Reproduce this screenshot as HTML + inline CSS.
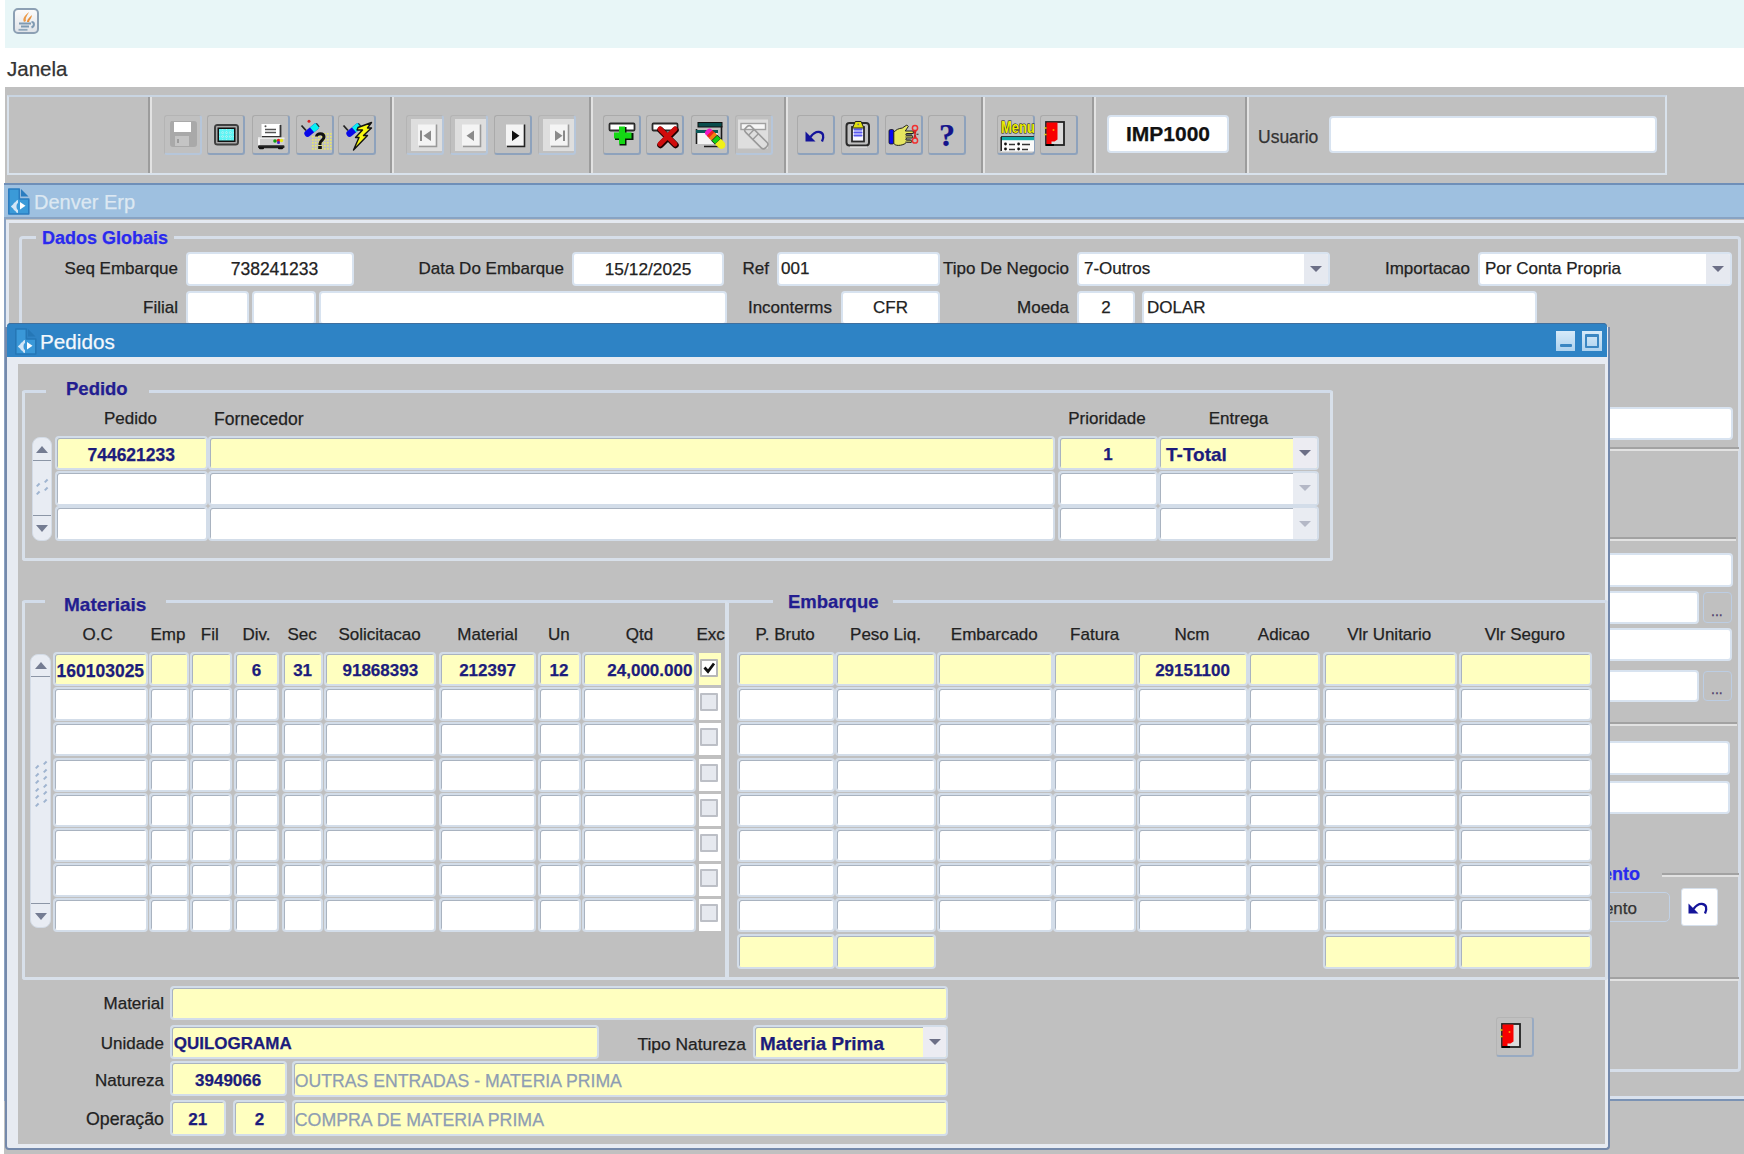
<!DOCTYPE html><html><head><meta charset="utf-8"><style>
*{margin:0;padding:0;box-sizing:content-box}
html,body{width:1744px;height:1154px;overflow:hidden;background:#fff;position:relative;font-family:"Liberation Sans",sans-serif;font-size:17px;color:#222;-webkit-text-stroke:0.25px currentColor}
div{position:absolute}
.t{white-space:nowrap}
.c{box-sizing:border-box;border:2px solid #d3dde9;border-radius:4px;box-shadow:inset 1px 1px 0 #a9b3c0;overflow:hidden}
.ct{position:absolute;left:0;top:0;right:0;bottom:0;white-space:nowrap;overflow:hidden;font-weight:bold;color:#1c1c7c}
.f{border:2px solid #d8e3f0;border-radius:4px;background:#fff;overflow:hidden}
.f .ct{font-weight:normal;color:#222}
.c .ct{top:2px;bottom:-2px}
.dd{right:0;top:0;width:24px;background:#e6e9f0}
.dd i{position:absolute;left:6px;top:50%;margin-top:-3px;width:0;height:0;border-left:6px solid transparent;border-right:6px solid transparent;border-top:6px solid #6c6f86}
.btn{border-style:solid;border-width:1px 2px 2px 1px;border-color:#b4b4b4 #98aac2 #98aac2 #b4b4b4;border-radius:3px}
.lbl{color:#222}
.grp{font-weight:bold;font-size:18px;color:#2a1f8f;background:#c0c0c0;padding:0 6px}
.fr{border:2px solid #dce3ec;border-top-color:#d3ddea}
</style></head><body>
<div style="left:5px;top:0px;width:1739px;height:48px;background:#e8f6f7"></div>
<div style="left:13px;top:8px;width:22px;height:22px;background:linear-gradient(#fbfbfb,#dfe3e8);border:2px solid #8ca0b4;border-radius:5px"><svg width="26" height="26" viewBox="0 0 26 26" style="position:absolute;left:-2px;top:-2px"><path d="M11 14c-2-3 1-7 5-10c-1 3-4 5-3 9z" fill="#ec9a48"/><path d="M14 14c0-3 3-5 5-7c0 3-3 5-3 7z" fill="#e8903a"/><path d="M6 15.5h12M8 18.5h8" stroke="#7f9ab2" stroke-width="2"/><path d="M18.5 14c3 0 3.5 4 0 5.5" stroke="#7f9ab2" stroke-width="2" fill="none"/><path d="M5.5 21.8h9" stroke="#90a8bc" stroke-width="1.8"/></svg></div>
<div class="t" style="left:7px;top:57px;height:24px;line-height:24px;font-size:20.5px;color:#333">Janela</div>
<div style="left:5px;top:87px;width:1739px;height:96px;background:#c0c0c0"></div>
<div style="left:7px;top:95px;width:1656px;height:76px;border:2px solid #d9e2ec;border-top-color:#c9d5e2"></div>
<div style="left:148px;top:97px;width:2px;height:76px;background:#9c9c9c"></div>
<div style="left:150px;top:97px;width:2px;height:76px;background:#e2e2e2"></div>
<div style="left:390px;top:97px;width:2px;height:76px;background:#9c9c9c"></div>
<div style="left:392px;top:97px;width:2px;height:76px;background:#e2e2e2"></div>
<div style="left:589px;top:97px;width:2px;height:76px;background:#9c9c9c"></div>
<div style="left:591px;top:97px;width:2px;height:76px;background:#e2e2e2"></div>
<div style="left:784px;top:97px;width:2px;height:76px;background:#9c9c9c"></div>
<div style="left:786px;top:97px;width:2px;height:76px;background:#e2e2e2"></div>
<div style="left:981px;top:97px;width:2px;height:76px;background:#9c9c9c"></div>
<div style="left:983px;top:97px;width:2px;height:76px;background:#e2e2e2"></div>
<div style="left:1092px;top:97px;width:2px;height:76px;background:#9c9c9c"></div>
<div style="left:1094px;top:97px;width:2px;height:76px;background:#e2e2e2"></div>
<div style="left:1245px;top:97px;width:2px;height:76px;background:#9c9c9c"></div>
<div style="left:1247px;top:97px;width:2px;height:76px;background:#e2e2e2"></div>
<div class="btn" style="left:164px;top:115px;width:35px;height:37px;border-color:#b4b4b4 #b6c6da #b6c6da #b4b4b4"><div style="left:-1px;top:-1px;width:38px;height:40px"><svg width="38" height="40" viewBox="0 0 38 40" style="position:absolute;left:0px;top:0px" shape-rendering="auto">
<path d="M7 6h23a3 3 0 0 1 3 3v20a3 3 0 0 1-3 3H9a3 3 0 0 1-3-3V8z" fill="#a9a9a9"/>
<rect x="10" y="7" width="17" height="10" fill="#fff"/>
<rect x="11" y="21" width="14" height="10" fill="#c4c4c4"/>
<rect x="13" y="24" width="2" height="4" fill="#9c9c9c"/>
</svg></div></div>
<div class="btn" style="left:207px;top:115px;width:35px;height:37px;border-color:#aaaaaa #8ea2bc #8ea2bc #aaaaaa"><div style="left:-1px;top:-1px;width:38px;height:40px"><svg width="38" height="40" viewBox="0 0 38 40" style="position:absolute;left:0px;top:0px" shape-rendering="auto">
<rect x="7" y="9" width="25" height="21.5" rx="3.5" fill="#3f3f3f"/>
<rect x="9" y="11" width="21" height="17.5" rx="1" fill="#a8a8a8"/>
<rect x="10.5" y="12.5" width="18" height="14.5" fill="#111"/>
<rect x="12" y="14" width="15" height="11.5" fill="#5ff4f4"/>
<path d="M12 17.8h15M12 21.6h15M15.7 14v11.5M19.5 14v11.5M23.2 14v11.5" stroke="#b8f0f0" stroke-width="0.9" stroke-dasharray="1 1"/>
</svg></div></div>
<div class="btn" style="left:252px;top:115px;width:35px;height:37px;border-color:#aaaaaa #8ea2bc #8ea2bc #aaaaaa"><div style="left:-1px;top:-1px;width:38px;height:40px"><svg width="38" height="40" viewBox="0 0 38 40" style="position:absolute;left:0px;top:0px" shape-rendering="auto">
<rect x="9.5" y="9" width="18.5" height="12" fill="#fff"/>
<path d="M28.5 10v12H10" stroke="#333" stroke-width="1.8" fill="none"/>
<path d="M13 14.5h11M13 17.5h11" stroke="#555" stroke-width="1.6"/>
<circle cx="13.5" cy="11.3" r="1" fill="#555"/>
<rect x="6" y="22.5" width="26.5" height="8" rx="1.5" fill="#cfcfcf"/>
<rect x="6" y="22.5" width="2" height="8" fill="#f4f4f4"/>
<rect x="6" y="22.5" width="26.5" height="1.5" fill="#ececec"/>
<rect x="6" y="30.2" width="26.5" height="3" rx="1.2" fill="#222"/>
<rect x="7" y="32" width="5" height="2.2" rx="1" fill="#111"/><rect x="26" y="32" width="5" height="2.2" rx="1" fill="#111"/>
<circle cx="23" cy="26" r="1.8" fill="#10a010"/><circle cx="26.5" cy="25.5" r="1.7" fill="#e01818"/><circle cx="29.5" cy="25.5" r="1.7" fill="#e8e818"/><circle cx="26.5" cy="27.5" r="1.5" fill="#4020d0"/>
</svg></div></div>
<div class="btn" style="left:296px;top:115px;width:35px;height:37px;border-color:#aaaaaa #8ea2bc #8ea2bc #aaaaaa"><div style="left:-1px;top:-1px;width:38px;height:40px"><svg width="38" height="40" viewBox="0 0 38 40" style="position:absolute;left:0px;top:0px" shape-rendering="auto">
<g fill="#e8e868">
<rect x="16" y="21" width="1.6" height="1.6"/><rect x="16" y="24" width="1.6" height="1.6"/><rect x="16" y="27" width="1.6" height="1.6"/><rect x="16" y="30" width="1.6" height="1.6"/><rect x="16" y="33" width="1.6" height="1.6"/><rect x="19" y="21" width="1.6" height="1.6"/><rect x="19" y="24" width="1.6" height="1.6"/><rect x="19" y="27" width="1.6" height="1.6"/><rect x="19" y="30" width="1.6" height="1.6"/><rect x="19" y="33" width="1.6" height="1.6"/><rect x="22" y="18" width="1.6" height="1.6"/><rect x="22" y="21" width="1.6" height="1.6"/><rect x="22" y="24" width="1.6" height="1.6"/><rect x="22" y="27" width="1.6" height="1.6"/><rect x="22" y="30" width="1.6" height="1.6"/><rect x="22" y="33" width="1.6" height="1.6"/><rect x="25" y="18" width="1.6" height="1.6"/><rect x="25" y="21" width="1.6" height="1.6"/><rect x="25" y="24" width="1.6" height="1.6"/><rect x="25" y="27" width="1.6" height="1.6"/><rect x="25" y="30" width="1.6" height="1.6"/><rect x="25" y="33" width="1.6" height="1.6"/><rect x="28" y="18" width="1.6" height="1.6"/><rect x="28" y="21" width="1.6" height="1.6"/><rect x="28" y="24" width="1.6" height="1.6"/><rect x="28" y="27" width="1.6" height="1.6"/><rect x="28" y="30" width="1.6" height="1.6"/><rect x="28" y="33" width="1.6" height="1.6"/><rect x="31" y="18" width="1.6" height="1.6"/><rect x="31" y="21" width="1.6" height="1.6"/><rect x="31" y="24" width="1.6" height="1.6"/><rect x="31" y="27" width="1.6" height="1.6"/><rect x="31" y="30" width="1.6" height="1.6"/><rect x="31" y="33" width="1.6" height="1.6"/><rect x="34" y="18" width="1.6" height="1.6"/><rect x="34" y="21" width="1.6" height="1.6"/><rect x="34" y="24" width="1.6" height="1.6"/><rect x="34" y="27" width="1.6" height="1.6"/><rect x="34" y="30" width="1.6" height="1.6"/><rect x="34" y="33" width="1.6" height="1.6"/>
</g>

<path d="M5.5 10.5l4.5 5" stroke="#222" stroke-width="1.8"/>
<g transform="rotate(-40 15.5 15)">
<rect x="7" y="12" width="17" height="6.5" rx="3.2" fill="#0808e8"/>
<path d="M16 12h4.8a3.25 3.25 0 0 1 0 6.5H16z" fill="#08f0f0"/>
<path d="M23.5 13v4.5" stroke="#333" stroke-width="1.2"/>
</g>

<circle cx="13" cy="6.3" r="1.5" fill="#d82020"/>
<path d="M20.5 21.5c0-3.5 7.5-3.8 7.5 0.5c0 3.2-4 3.5-4 6.5v1.5" stroke="#111" stroke-width="3" fill="none"/>
<rect x="22.2" y="31" width="3.6" height="3" fill="#111"/>
</svg></div></div>
<div class="btn" style="left:338px;top:115px;width:35px;height:37px;border-color:#aaaaaa #8ea2bc #8ea2bc #aaaaaa"><div style="left:-1px;top:-1px;width:38px;height:40px"><svg width="38" height="40" viewBox="0 0 38 40" style="position:absolute;left:0px;top:0px" shape-rendering="auto">

<path d="M5.5 10.5l4.5 5" stroke="#222" stroke-width="1.8"/>
<g transform="rotate(-40 15.5 15)">
<rect x="7" y="12" width="17" height="6.5" rx="3.2" fill="#0808e8"/>
<path d="M16 12h4.8a3.25 3.25 0 0 1 0 6.5H16z" fill="#08f0f0"/>
<path d="M23.5 13v4.5" stroke="#333" stroke-width="1.2"/>
</g>

<path d="M20 12.5L33.5 7.5L29.5 13L33.5 13L25.5 20.5L29.5 20.5L15.5 35L21 22.5L17.5 22.5L24.5 15L19 15z" fill="#f8f810" stroke="#111" stroke-width="1.4" stroke-linejoin="round"/>
</svg></div></div>
<div class="btn" style="left:406px;top:115px;width:35px;height:37px;border-color:#b4b4b4 #b6c6da #b6c6da #b4b4b4"><div style="left:-1px;top:-1px;width:38px;height:40px"><svg width="38" height="40" viewBox="0 0 38 40" style="position:absolute;left:0px;top:0px" shape-rendering="auto"><rect x="5" y="4" width="31" height="32" fill="#dedede"/><rect x="12" y="9.5" width="18" height="21" fill="#f4f4f4"/><path d="M30.5 9.5v22H13" stroke="#9a9a9a" stroke-width="1.6" fill="none"/><rect x="14" y="15.5" width="2" height="10.5" fill="#8a8a8a"/><path d="M25 15.5v10.5l-7.5-5.25z" fill="#8a8a8a"/></svg></div></div>
<div class="btn" style="left:450px;top:115px;width:35px;height:37px;border-color:#b4b4b4 #b6c6da #b6c6da #b4b4b4"><div style="left:-1px;top:-1px;width:38px;height:40px"><svg width="38" height="40" viewBox="0 0 38 40" style="position:absolute;left:0px;top:0px" shape-rendering="auto"><rect x="5" y="4" width="31" height="32" fill="#dedede"/><rect x="12" y="9.5" width="18" height="21" fill="#f4f4f4"/><path d="M30.5 9.5v22H13" stroke="#9a9a9a" stroke-width="1.6" fill="none"/><path d="M24 15.5v10.5l-7.5-5.25z" fill="#8a8a8a"/></svg></div></div>
<div class="btn" style="left:494px;top:115px;width:35px;height:37px;border-color:#aaaaaa #8ea2bc #8ea2bc #aaaaaa"><div style="left:-1px;top:-1px;width:38px;height:40px"><svg width="38" height="40" viewBox="0 0 38 40" style="position:absolute;left:0px;top:0px" shape-rendering="auto"><rect x="5" y="4" width="31" height="32" fill="#c0c0c0"/><rect x="12" y="9.5" width="18" height="21" fill="#f4f4f4"/><path d="M30.5 9.5v22H13" stroke="#222" stroke-width="1.6" fill="none"/><path d="M18 15.5v10.5l7.5-5.25z" fill="#111"/></svg></div></div>
<div class="btn" style="left:538px;top:115px;width:35px;height:37px;border-color:#b4b4b4 #b6c6da #b6c6da #b4b4b4"><div style="left:-1px;top:-1px;width:38px;height:40px"><svg width="38" height="40" viewBox="0 0 38 40" style="position:absolute;left:0px;top:0px" shape-rendering="auto"><rect x="5" y="4" width="31" height="32" fill="#dedede"/><rect x="12" y="9.5" width="18" height="21" fill="#f4f4f4"/><path d="M30.5 9.5v22H13" stroke="#9a9a9a" stroke-width="1.6" fill="none"/><rect x="25" y="15.5" width="2" height="10.5" fill="#8a8a8a"/><path d="M17 15.5v10.5l7.5-5.25z" fill="#8a8a8a"/></svg></div></div>
<div class="btn" style="left:603px;top:115px;width:35px;height:37px;border-color:#aaaaaa #8ea2bc #8ea2bc #aaaaaa"><div style="left:-1px;top:-1px;width:38px;height:40px"><svg width="38" height="40" viewBox="0 0 38 40" style="position:absolute;left:0px;top:0px" shape-rendering="auto">
<rect x="6.5" y="8.5" width="25" height="7" rx="1" fill="#fff" stroke="#2a2a2a" stroke-width="1.8"/>
<path d="M20 12v18.5M12 21.5h18.5" stroke="#061806" stroke-width="7"/>
<path d="M19 11.5v17.5M11 20.5h17.5" stroke="#14d814" stroke-width="6"/>
</svg></div></div>
<div class="btn" style="left:646px;top:115px;width:35px;height:37px;border-color:#aaaaaa #8ea2bc #8ea2bc #aaaaaa"><div style="left:-1px;top:-1px;width:38px;height:40px"><svg width="38" height="40" viewBox="0 0 38 40" style="position:absolute;left:0px;top:0px" shape-rendering="auto">
<rect x="6.5" y="8.5" width="25" height="7" rx="1" fill="#fff" stroke="#2a2a2a" stroke-width="1.8"/>
<path d="M14.5 15l15 15M29.5 15l-15 15" stroke="#200000" stroke-width="6.5" stroke-linecap="round"/>
<path d="M14 14l15 15M29 14l-15 15" stroke="#d00c0c" stroke-width="5" stroke-linecap="round"/>
</svg></div></div>
<div class="btn" style="left:691px;top:115px;width:35px;height:37px;border-color:#aaaaaa #8ea2bc #8ea2bc #aaaaaa"><div style="left:-1px;top:-1px;width:38px;height:40px"><svg width="38" height="40" viewBox="0 0 38 40" style="position:absolute;left:0px;top:0px" shape-rendering="auto">
<rect x="7" y="7.5" width="24" height="4.5" fill="#0a4c4c" stroke="#111" stroke-width="1"/>
<path d="M30.5 11v15M13 31.5h17.5" stroke="#1a1a1a" stroke-width="1.6"/>
<rect x="5.5" y="15" width="21" height="14" fill="#f4f4f4"/>
<path d="M5.5 14v15" stroke="#1a1a1a" stroke-width="1.6"/>
<rect x="5" y="15" width="22" height="3" fill="#0a5a5a"/>
<g transform="translate(0.5 5.5) rotate(-45 24 18.5)">
<rect x="20" y="6" width="8" height="6" rx="3" fill="#f018c8"/>
<rect x="20" y="10" width="8" height="5" fill="#f02020"/>
<rect x="20" y="13" width="8" height="4" fill="#f08010"/>
<rect x="20" y="17" width="8" height="5" fill="#10d010" stroke="#111" stroke-width="0.8"/>
<path d="M20 22h8v5c0 2-2 4-4 4s-4-2-4-4z" fill="#f0f018"/>
</g>
</svg></div></div>
<div class="btn" style="left:735px;top:115px;width:35px;height:37px;border-color:#b4b4b4 #b6c6da #b6c6da #b4b4b4"><div style="left:-1px;top:-1px;width:38px;height:40px"><svg width="38" height="40" viewBox="0 0 38 40" style="position:absolute;left:0px;top:0px" shape-rendering="auto">
<rect x="3" y="4.5" width="30" height="29" fill="#dedede"/>
<rect x="6" y="8.5" width="24.5" height="6" fill="#f6f6f6" stroke="#a0a0a0" stroke-width="1.4"/>
<g transform="rotate(-45 22 23)">
<rect x="18" y="8" width="8" height="28" rx="3" fill="none" stroke="#9a9a9a" stroke-width="1.6"/>
<path d="M18 15h8M18 21h8" stroke="#9a9a9a" stroke-width="1.4"/>
</g>
</svg></div></div>
<div class="btn" style="left:797px;top:115px;width:35px;height:37px;border-color:#aaaaaa #8ea2bc #8ea2bc #aaaaaa"><div style="left:-1px;top:-1px;width:38px;height:40px"><svg width="38" height="40" viewBox="0 0 38 40" style="position:absolute;left:0px;top:0px" shape-rendering="auto">
<path d="M8.5 16.5v10h10z" fill="#14149a"/>
<path d="M13.5 22c2.5-3.5 6-5.5 9-5c3.5 0.5 5 4 2.5 9.5" stroke="#14149a" stroke-width="2.3" fill="none"/>
</svg></div></div>
<div class="btn" style="left:841px;top:115px;width:35px;height:37px;border-color:#aaaaaa #8ea2bc #8ea2bc #aaaaaa"><div style="left:-1px;top:-1px;width:38px;height:40px"><svg width="38" height="40" viewBox="0 0 38 40" style="position:absolute;left:0px;top:0px" shape-rendering="auto">
<rect x="5.5" y="8" width="22.5" height="22.5" rx="3" fill="none" stroke="#2a2a2a" stroke-width="2"/>
<rect x="11" y="12" width="12" height="14.5" fill="#f6f6ff" stroke="#2a2a2a" stroke-width="1.8"/>
<path d="M13.5 14.5h7M13.5 17.5h7M13.5 20.5h7" stroke="#5858f0" stroke-width="2" stroke-linecap="round"/>
<path d="M11.5 13l2.8-6.5h5.8l2.8 6.5z" fill="#e0e010" stroke="#222" stroke-width="1"/>
<circle cx="17.2" cy="9.3" r="0.9" fill="#777"/>
<rect x="9" y="31.5" width="17" height="1.2" fill="#e6e6e6"/>
</svg></div></div>
<div class="btn" style="left:885px;top:115px;width:35px;height:37px;border-color:#aaaaaa #8ea2bc #8ea2bc #aaaaaa"><div style="left:-1px;top:-1px;width:38px;height:40px"><svg width="38" height="40" viewBox="0 0 38 40" style="position:absolute;left:0px;top:0px" shape-rendering="auto">
<rect x="4" y="14.5" width="4.8" height="14.5" rx="1.5" fill="#0a0af0" stroke="#111" stroke-width="0.8"/>
<path d="M8.8 17.5c2-3 5-4 8.5-4.5l4.5-3 1.5 1.5-3 4.5h8v2.5h-7v2.2h6v2.3h-6v2.2h5v2.2h-5c-1.5 2-5 3-8 3c-2.5 0-4-1-4.5-2z" fill="#e6e660" stroke="#222" stroke-width="1"/>
<path d="M20 19.5h7M20 22h6M20 24.5h5.5M20 27h5" stroke="#555" stroke-width="0.8"/>
<circle cx="30" cy="13" r="2.6" fill="none" stroke="#f03030" stroke-width="1.5"/>
<circle cx="30" cy="25.5" r="2.6" fill="none" stroke="#f03030" stroke-width="1.5"/>
<path d="M29 15.5l2 7.5M31 15.5l-2 7.5" stroke="#d02020" stroke-width="1.2"/>
<path d="M31.5 19.3l2 0" stroke="#444" stroke-width="1.2"/>
</svg></div></div>
<div class="btn" style="left:928px;top:115px;width:35px;height:37px;border-color:#aaaaaa #8ea2bc #8ea2bc #aaaaaa"><div style="left:-1px;top:-1px;width:38px;height:40px"><div style="position:absolute;left:0;top:0;width:38px;height:40px;text-align:center;font-family:'Liberation Serif',serif;font-weight:bold;font-size:32px;line-height:40px;color:#14148c">?</div></div></div>
<div class="btn" style="left:997px;top:115px;width:35px;height:37px;border-color:#aaaaaa #8ea2bc #8ea2bc #aaaaaa"><div style="left:-1px;top:-1px;width:38px;height:40px"><svg width="38" height="40" viewBox="0 0 38 40" style="position:absolute;left:0px;top:0px" shape-rendering="auto">
<text x="4" y="18" font-family="Liberation Sans" font-weight="bold" font-size="17" fill="#ecec00" stroke="#111" stroke-width="1.1" paint-order="stroke" textLength="34" lengthAdjust="spacingAndGlyphs">Menu</text>
<rect x="4" y="21.5" width="33" height="15" fill="#fbfbfb"/>
<rect x="4" y="21" width="33" height="1" fill="#333"/>
<rect x="4" y="22" width="33" height="3.2" fill="#10a8a8"/>
<rect x="3.5" y="22" width="1.4" height="14" fill="#111"/>
<circle cx="8.5" cy="29" r="1.4" fill="#111"/><circle cx="21.6" cy="29" r="1.4" fill="#111"/>
<circle cx="8.5" cy="34" r="1.4" fill="#111"/><circle cx="21.6" cy="34" r="1.4" fill="#111"/>
<path d="M12 29.5h6M25 29.5h8M12 34.5h6M25 34.5h6" stroke="#333" stroke-width="1.6"/>
</svg></div></div>
<div class="btn" style="left:1040px;top:115px;width:35px;height:37px;border-color:#aaaaaa #8ea2bc #8ea2bc #aaaaaa"><div style="left:-1px;top:-1px;width:38px;height:40px"><svg width="38" height="40" viewBox="0 0 38 40" style="position:absolute;left:0px;top:0px" shape-rendering="auto">
<rect x="6" y="7" width="18" height="23" fill="#dcdcdc" stroke="#222" stroke-width="1.8"/>
<path d="M6.5 7.5h11v17l-3 2h-3v3h-5z" fill="#f80000"/>
<path d="M6 30h8" stroke="#000" stroke-width="2"/>
<circle cx="13.5" cy="15" r="1" fill="#ff9a00"/>
<path d="M4.5 13h2M4.5 19.5h2" stroke="#e8d000" stroke-width="1.4"/>
</svg></div></div>
<div class="f" style="left:1107px;top:115px;width:118px;height:34px">
<div class="ct" style="line-height:34px;text-align:center;"><b style="font-size:21px;color:#111">IMP1000</b></div>
</div>
<div class="t" style="left:1258px;top:126px;height:22px;line-height:22px;font-size:17.5px;color:#333">Usuario</div>
<div class="f" style="left:1329px;top:116px;width:324px;height:33px">
</div>
<div style="left:4px;top:183px;width:1740px;height:2px;background:#6f8fb8"></div>
<div style="left:4px;top:185px;width:1740px;height:32px;background:#9ec0e0"></div>
<div style="left:4px;top:217px;width:1740px;height:2px;background:#88a3c3"></div>
<!--DENVERICON-->
<div class="t" style="left:34px;top:189.8px;height:24px;line-height:24px;font-size:20px;color:#dce8f2">Denver Erp</div>
<div style="left:4px;top:219px;width:1740px;height:935px;background:#c0c0c0"></div>
<div style="left:4px;top:219px;width:2px;height:882px;background:#8ba2c2"></div>
<div style="left:6px;top:220px;width:1738px;height:3px;background:#e4e9f1;border-top-left-radius:3px"></div>
<div style="left:6px;top:220px;width:3px;height:879px;background:#e4e9f1"></div>
<div style="left:6px;top:1096px;width:1738px;height:3px;background:#dae2ee"></div>
<div style="left:6px;top:1099px;width:1738px;height:2px;background:#7a92b4"></div>
<div style="left:19px;top:236px;width:1716px;height:830px;border:3px solid #d6dee9;border-radius:4px"></div>
<div class="t" style="left:36px;top:227px;height:22px;line-height:22px;font-weight:bold;font-size:18px;color:#2a2aee;background:#c0c0c0;padding:0 6px">Dados Globais</div>
<div class="t" style="right:1566px;top:252px;height:34px;line-height:34px;text-align:right;font-size:17px;color:#222">Seq Embarque</div>
<div class="f" style="left:186px;top:252px;width:164px;height:30px">
<div class="ct" style="line-height:30px;text-align:center;font-size:17.5px;padding-left:9px">738241233</div>
</div>
<div class="t" style="right:1180px;top:252px;height:34px;line-height:34px;text-align:right;font-size:17px;color:#222">Data Do Embarque</div>
<div class="f" style="left:572px;top:252px;width:148px;height:30px">
<div class="ct" style="line-height:30px;text-align:center;font-size:17.3px">15/12/2025</div>
</div>
<div class="t" style="right:975px;top:252px;height:34px;line-height:34px;text-align:right;font-size:17px;color:#222">Ref</div>
<div class="f" style="left:777px;top:252px;width:159px;height:30px">
<div class="ct" style="line-height:30px;text-align:left;padding-left:5px;padding-left:2px">001</div>
</div>
<div class="t" style="right:675px;top:252px;height:34px;line-height:34px;text-align:right;font-size:17px;color:#222">Tipo De Negocio</div>
<div class="f" style="left:1077px;top:252px;width:249px;height:30px">
<div class="dd" style="height:30px"><i></i></div>
<div class="ct" style="line-height:30px;text-align:left;padding-left:5px;">7-Outros</div>
</div>
<div class="t" style="right:274px;top:252px;height:34px;line-height:34px;text-align:right;font-size:17px;color:#222">Importacao</div>
<div class="f" style="left:1478px;top:252px;width:250px;height:30px">
<div class="dd" style="height:30px"><i></i></div>
<div class="ct" style="line-height:30px;text-align:left;padding-left:5px;">Por Conta Propria</div>
</div>
<div class="t" style="right:1566px;top:291px;height:34px;line-height:34px;text-align:right;font-size:17px;color:#222">Filial</div>
<div class="f" style="left:186px;top:291px;width:59px;height:30px">
</div>
<div class="f" style="left:252px;top:291px;width:60px;height:30px">
</div>
<div class="f" style="left:319px;top:291px;width:404px;height:30px">
</div>
<div class="t" style="right:912px;top:291px;height:34px;line-height:34px;text-align:right;font-size:17px;color:#222">Inconterms</div>
<div class="f" style="left:841px;top:291px;width:95px;height:30px">
<div class="ct" style="line-height:30px;text-align:center;">CFR</div>
</div>
<div class="t" style="right:675px;top:291px;height:34px;line-height:34px;text-align:right;font-size:17px;color:#222">Moeda</div>
<div class="f" style="left:1077px;top:291px;width:54px;height:30px">
<div class="ct" style="line-height:30px;text-align:center;">2</div>
</div>
<div class="f" style="left:1142px;top:291px;width:391px;height:30px">
<div class="ct" style="line-height:30px;text-align:left;padding-left:5px;padding-left:3px">DOLAR</div>
</div>
<div class="f" style="left:1540px;top:407px;width:189px;height:29px">
</div>
<div style="left:1540px;top:447px;width:199px;height:2px;background:#a2a2a2"></div>
<div style="left:1540px;top:449px;width:199px;height:2px;background:#e2e2e2"></div>
<div style="left:1540px;top:537px;width:196px;height:2px;background:#a2a2a2"></div>
<div style="left:1540px;top:539px;width:196px;height:2px;background:#e2e2e2"></div>
<div class="f" style="left:1540px;top:553px;width:189px;height:30px">
</div>
<div class="f" style="left:1540px;top:591px;width:155px;height:29px">
</div>
<div style="left:1703px;top:592px;width:27px;height:29px;border:1px solid #bccde3;border-radius:4px"><div style="left:7px;top:14px;font-size:14px;line-height:8px;color:#4a3a6a">...</div></div>
<div class="f" style="left:1540px;top:628px;width:188px;height:29px">
</div>
<div class="f" style="left:1540px;top:670px;width:155px;height:28px">
</div>
<div style="left:1703px;top:671px;width:27px;height:28px;border:1px solid #bccde3;border-radius:4px"><div style="left:7px;top:13px;font-size:14px;line-height:8px;color:#4a3a6a">...</div></div>
<div style="left:1540px;top:722px;width:197px;height:2px;background:#a2a2a2"></div>
<div style="left:1540px;top:724px;width:197px;height:2px;background:#e2e2e2"></div>
<div class="f" style="left:1540px;top:741px;width:186px;height:30px">
</div>
<div class="f" style="left:1540px;top:781px;width:186px;height:29px">
</div>
<div style="left:1662px;top:873px;width:77px;height:2px;background:#a2a2a2"></div>
<div style="left:1662px;top:875px;width:77px;height:2px;background:#e2e2e2"></div>
<div class="t" style="right:104px;top:863px;height:22px;line-height:22px;text-align:right;font-weight:bold;font-size:18px;color:#2a2aee">Lancamento</div>
<div style="left:1540px;top:892px;width:128px;height:28px;border:1px solid #c2d2e6;border-radius:5px"><div class="t" style="right:32px;top:2px;line-height:28px;font-size:17px;color:#333">Lancamento</div></div>
<div style="left:1681px;top:888px;width:35px;height:36px;background:#fff;border:1px solid #d6e0ec;border-radius:3px"><svg width="38" height="40" viewBox="0 0 38 40" style="position:absolute;left:-2px;top:-2px" shape-rendering="auto">
<path d="M8.5 16.5v10h10z" fill="#14149a"/>
<path d="M13.5 22c2.5-3.5 6-5.5 9-5c3.5 0.5 5 4 2.5 9.5" stroke="#14149a" stroke-width="2.3" fill="none"/>
</svg></div>
<div style="left:1540px;top:977px;width:199px;height:2px;background:#a2a2a2"></div>
<div style="left:1540px;top:979px;width:199px;height:2px;background:#e2e2e2"></div>
<div style="left:8px;top:188px;width:22px;height:27px;"><svg width="22" height="27" viewBox="0 0 22 27" style="position:absolute;left:0;top:0"><path d="M0.8 1h10.5v10h9.5v15H0.8z" fill="#3b9ad8" stroke="#2a7cc0" stroke-width="1.6" stroke-linejoin="round"/><path d="M13 1l7.5 7.5h-7.5z" fill="#2a7cc0"/><path d="M10 12c-1.5 0-2 1-2.5 2c-1 0.5-2 1-2 2c-1 1-2.5 2-2.5 2.5c0 0.5 1.5 1.5 2.5 2.5c0 1 1 1.5 2 2c0.5 1 1 2 2.5 2v-3c-1-0.5-1.5-1.5-1.5-3.5s0.5-3 1.5-3.5z" fill="#d4e6f6"/><path d="M12 14v7.5l5.5-3.75z" fill="#fff"/></svg></div>
<div style="left:5px;top:327px;width:1605px;height:823px;box-sizing:border-box;background:#e7ebf2;border:2px solid #7489ab;border-top:none;border-radius:0 0 4px 4px"></div>
<div style="left:7px;top:323px;width:1600px;height:34px;background:#2e83c5;border-radius:4px 4px 0 0;box-shadow:inset 0 1px 0 #3f6f9e"></div>
<div style="left:15px;top:328px;width:22px;height:27px;"><svg width="22" height="27" viewBox="0 0 22 27" style="position:absolute;left:0;top:0"><path d="M0.8 1h10.5v10h9.5v15H0.8z" fill="#3a98d8" stroke="#2577b6" stroke-width="1.6" stroke-linejoin="round"/><path d="M13 1l7.5 7.5h-7.5z" fill="#2577b6"/><path d="M10 12c-1.5 0-2 1-2.5 2c-1 0.5-2 1-2 2c-1 1-2.5 2-2.5 2.5c0 0.5 1.5 1.5 2.5 2.5c0 1 1 1.5 2 2c0.5 1 1 2 2.5 2v-3c-1-0.5-1.5-1.5-1.5-3.5s0.5-3 1.5-3.5z" fill="#d4e6f6"/><path d="M12 14v7.5l5.5-3.75z" fill="#fff"/></svg></div>
<div class="t" style="left:40px;top:328.8px;height:26px;line-height:26px;font-size:20.7px;color:#f4f8fc">Pedidos</div>
<div style="left:1556px;top:331px;width:19px;height:20px;background:linear-gradient(#d6eaf9,#aed2ee)"><div style="left:4px;top:13px;width:12px;height:3px;background:#3a86c2;border-radius:1px"></div></div>
<div style="left:1582px;top:331px;width:20px;height:20px;background:linear-gradient(#d6eaf9,#aed2ee)"><div style="left:3px;top:3px;width:10px;height:9px;border:2px solid #3a86c2;border-top-width:3px;border-radius:1px"></div></div>
<div style="left:18px;top:364px;width:1587px;height:780px;background:#c0c0c0"></div>
<div style="left:22px;top:390px;width:1305px;height:165px;border:3px solid #d8e0ea;border-top-color:#d2dcea;border-radius:3px"></div>
<div class="t" style="left:46px;top:376.6px;height:24px;line-height:24px;font-weight:bold;font-size:18.5px;color:#231d90;background:#c0c0c0;padding:0 21px 0 20px">Pedido</div>
<div class="t" style="left:-69.5px;top:408.5px;width:400px;height:20px;line-height:20px;text-align:center;font-size:17px;color:#222">Pedido</div>
<div class="t" style="left:214px;top:408.5px;height:20px;line-height:20px;font-size:17.5px;color:#222">Fornecedor</div>
<div class="t" style="left:907.0px;top:408.5px;width:400px;height:20px;line-height:20px;text-align:center;font-size:17px;color:#222">Prioridade</div>
<div class="t" style="left:1038.5px;top:408.5px;width:400px;height:20px;line-height:20px;text-align:center;font-size:17px;color:#222">Entrega</div>
<div style="left:32px;top:437px;width:18px;height:102px;background:#e8ecf3;border:1px solid #d3dbe6;border-radius:8px"><div style="left:0;top:22px;width:18px;height:1px;background:#8c96a6"></div><div style="left:0;top:77px;width:18px;height:1px;background:#8c96a6"></div><div style="left:3.0px;top:7.5px;width:0;height:0;border-left:6px solid transparent;border-right:6px solid transparent;border-bottom:7px solid #747c92"></div><div style="left:3.0px;top:87.0px;width:0;height:0;border-left:6px solid transparent;border-right:6px solid transparent;border-top:7px solid #747c92"></div><div style="left:3.0px;top:46.0px;width:4px;height:1.5px;background:#9fb4d0;transform:rotate(-45deg)"></div><div style="left:11.0px;top:42.0px;width:4px;height:1.5px;background:#9fb4d0;transform:rotate(-45deg)"></div><div style="left:3.0px;top:53.5px;width:4px;height:1.5px;background:#9fb4d0;transform:rotate(-45deg)"></div><div style="left:11.0px;top:49.5px;width:4px;height:1.5px;background:#9fb4d0;transform:rotate(-45deg)"></div></div>
<div class="c" style="left:55px;top:435.8px;width:152.5px;height:34.5px;background:#ffffc0">
<div class="ct " style="line-height:30.5px;text-align:center;font-size:17.5px">744621233</div>
</div>
<div class="c" style="left:208px;top:435.8px;width:847px;height:34.5px;background:#ffffc0">
</div>
<div class="c" style="left:1058px;top:435.8px;width:100px;height:34.5px;background:#ffffc0">
<div class="ct " style="line-height:30.5px;text-align:center;">1</div>
</div>
<div class="c" style="left:1158px;top:435.8px;width:161px;height:34.5px;background:#ffffc0"><div class="dd" style="height:30.5px;width:24px;background:#ececf2"><i style=""></i></div><div class="ct" style="line-height:30.5px;padding-left:6px;font-size:19px">T-Total</div></div>
<div class="c" style="left:55px;top:471px;width:152.5px;height:34.5px;background:#fff">
</div>
<div class="c" style="left:208px;top:471px;width:847px;height:34.5px;background:#fff">
</div>
<div class="c" style="left:1058px;top:471px;width:100px;height:34.5px;background:#fff">
</div>
<div class="c" style="left:1158px;top:471px;width:161px;height:34.5px;background:#fff"><div class="dd" style="height:30.5px;width:24px;background:#e9ecf2"><i style="border-top-color:#b4b8c6"></i></div></div>
<div class="c" style="left:55px;top:506.3px;width:152.5px;height:34.5px;background:#fff">
</div>
<div class="c" style="left:208px;top:506.3px;width:847px;height:34.5px;background:#fff">
</div>
<div class="c" style="left:1058px;top:506.3px;width:100px;height:34.5px;background:#fff">
</div>
<div class="c" style="left:1158px;top:506.3px;width:161px;height:34.5px;background:#fff"><div class="dd" style="height:30.5px;width:24px;background:#e9ecf2"><i style="border-top-color:#b4b8c6"></i></div></div>
<div style="left:22px;top:600px;width:701px;height:374px;border:3px solid #d8e0ea;border-top-color:#d2dcea;border-radius:3px"></div>
<div class="t" style="left:45px;top:592.9px;height:24px;line-height:24px;font-weight:bold;font-size:19px;color:#231d90;background:#c0c0c0;padding:0 20px 0 19px">Materiais</div>
<div style="left:725px;top:600px;width:877px;height:374px;border:3px solid #d8e0ea;border-top-color:#d2dcea;border-radius:3px"></div>
<div class="t" style="left:773px;top:589.6px;height:24px;line-height:24px;font-weight:bold;font-size:18.5px;color:#231d90;background:#c0c0c0;padding:0 15px 0 15px">Embarque</div>
<div class="t" style="left:-102.3px;top:624.8px;width:400px;height:20px;line-height:20px;text-align:center;font-size:17px;color:#222">O.C</div>
<div class="t" style="left:-32.0px;top:624.8px;width:400px;height:20px;line-height:20px;text-align:center;font-size:17px;color:#222">Emp</div>
<div class="t" style="left:9.800000000000011px;top:624.8px;width:400px;height:20px;line-height:20px;text-align:center;font-size:17px;color:#222">Fil</div>
<div class="t" style="left:56.39999999999998px;top:624.8px;width:400px;height:20px;line-height:20px;text-align:center;font-size:17px;color:#222">Div.</div>
<div class="t" style="left:102.19999999999999px;top:624.8px;width:400px;height:20px;line-height:20px;text-align:center;font-size:17px;color:#222">Sec</div>
<div class="t" style="left:179.5px;top:624.8px;width:400px;height:20px;line-height:20px;text-align:center;font-size:17px;color:#222">Solicitacao</div>
<div class="t" style="left:287.6px;top:624.8px;width:400px;height:20px;line-height:20px;text-align:center;font-size:17px;color:#222">Material</div>
<div class="t" style="left:358.9px;top:624.8px;width:400px;height:20px;line-height:20px;text-align:center;font-size:17px;color:#222">Un</div>
<div class="t" style="left:439.5px;top:624.8px;width:400px;height:20px;line-height:20px;text-align:center;font-size:17px;color:#222">Qtd</div>
<div class="t" style="left:510.6px;top:624.8px;width:400px;height:20px;line-height:20px;text-align:center;font-size:17px;color:#222">Exc</div>
<div class="t" style="left:585.2px;top:624.8px;width:400px;height:20px;line-height:20px;text-align:center;font-size:17px;color:#222">P. Bruto</div>
<div class="t" style="left:685.5px;top:624.8px;width:400px;height:20px;line-height:20px;text-align:center;font-size:17px;color:#222">Peso Liq.</div>
<div class="t" style="left:794.3px;top:624.8px;width:400px;height:20px;line-height:20px;text-align:center;font-size:17px;color:#222">Embarcado</div>
<div class="t" style="left:894.7px;top:624.8px;width:400px;height:20px;line-height:20px;text-align:center;font-size:17px;color:#222">Fatura</div>
<div class="t" style="left:992.0px;top:624.8px;width:400px;height:20px;line-height:20px;text-align:center;font-size:17px;color:#222">Ncm</div>
<div class="t" style="left:1083.8px;top:624.8px;width:400px;height:20px;line-height:20px;text-align:center;font-size:17px;color:#222">Adicao</div>
<div class="t" style="left:1189.2px;top:624.8px;width:400px;height:20px;line-height:20px;text-align:center;font-size:17px;color:#222">Vlr Unitario</div>
<div class="t" style="left:1324.8px;top:624.8px;width:400px;height:20px;line-height:20px;text-align:center;font-size:17px;color:#222">Vlr Seguro</div>
<div style="left:30px;top:654px;width:19px;height:272px;background:#e8ecf3;border:1px solid #d3dbe6;border-radius:8px"><div style="left:0;top:21px;width:19px;height:1px;background:#8c96a6"></div><div style="left:0;top:248px;width:19px;height:1px;background:#8c96a6"></div><div style="left:3.5px;top:7.0px;width:0;height:0;border-left:6px solid transparent;border-right:6px solid transparent;border-bottom:7px solid #747c92"></div><div style="left:3.5px;top:257.5px;width:0;height:0;border-left:6px solid transparent;border-right:6px solid transparent;border-top:7px solid #747c92"></div><div style="left:3.5px;top:111.0px;width:4px;height:1.5px;background:#9fb4d0;transform:rotate(-45deg)"></div><div style="left:11.5px;top:107.0px;width:4px;height:1.5px;background:#9fb4d0;transform:rotate(-45deg)"></div><div style="left:3.5px;top:118.5px;width:4px;height:1.5px;background:#9fb4d0;transform:rotate(-45deg)"></div><div style="left:11.5px;top:114.5px;width:4px;height:1.5px;background:#9fb4d0;transform:rotate(-45deg)"></div><div style="left:3.5px;top:126.0px;width:4px;height:1.5px;background:#9fb4d0;transform:rotate(-45deg)"></div><div style="left:11.5px;top:122.0px;width:4px;height:1.5px;background:#9fb4d0;transform:rotate(-45deg)"></div><div style="left:3.5px;top:133.5px;width:4px;height:1.5px;background:#9fb4d0;transform:rotate(-45deg)"></div><div style="left:11.5px;top:129.5px;width:4px;height:1.5px;background:#9fb4d0;transform:rotate(-45deg)"></div><div style="left:3.5px;top:141.0px;width:4px;height:1.5px;background:#9fb4d0;transform:rotate(-45deg)"></div><div style="left:11.5px;top:137.0px;width:4px;height:1.5px;background:#9fb4d0;transform:rotate(-45deg)"></div><div style="left:3.5px;top:148.5px;width:4px;height:1.5px;background:#9fb4d0;transform:rotate(-45deg)"></div><div style="left:11.5px;top:144.5px;width:4px;height:1.5px;background:#9fb4d0;transform:rotate(-45deg)"></div></div>
<div class="c" style="left:52.5px;top:652.3px;width:95px;height:34px;background:#ffffc0">
<div class="ct " style="line-height:30px;text-align:left;padding-left:3px;padding-left:2px;font-size:17.5px">160103025</div>
</div>
<div class="c" style="left:148.5px;top:652.3px;width:40.7px;height:34px;background:#ffffc0">
</div>
<div class="c" style="left:190.3px;top:652.3px;width:41.6px;height:34px;background:#ffffc0">
</div>
<div class="c" style="left:233.8px;top:652.3px;width:45.2px;height:34px;background:#ffffc0">
<div class="ct " style="line-height:30px;text-align:center;">6</div>
</div>
<div class="c" style="left:281.8px;top:652.3px;width:41.6px;height:34px;background:#ffffc0">
<div class="ct " style="line-height:30px;text-align:center;">31</div>
</div>
<div class="c" style="left:324.3px;top:652.3px;width:112px;height:34px;background:#ffffc0">
<div class="ct " style="line-height:30px;text-align:center;">91868393</div>
</div>
<div class="c" style="left:439px;top:652.3px;width:97px;height:34px;background:#ffffc0">
<div class="ct " style="line-height:30px;text-align:center;">212397</div>
</div>
<div class="c" style="left:537.5px;top:652.3px;width:43px;height:34px;background:#ffffc0">
<div class="ct " style="line-height:30px;text-align:center;">12</div>
</div>
<div class="c" style="left:582px;top:652.3px;width:114.4px;height:34px;background:#ffffc0">
<div class="ct " style="line-height:30px;text-align:right;padding-right:2px;">24,000.000</div>
</div>
<div style="left:698.5px;top:653.3px;width:22px;height:32px;background:#ffffc0"></div>
<div style="left:699.5px;top:658.8px;width:14px;height:14px;background:#fff;border:2px solid #b6b6b6;border-radius:1px"><svg width="14" height="14" style="position:absolute;left:0;top:0"><path d="M2.5 6.5l3.5 4 6-8" stroke="#111" stroke-width="2.8" fill="none"/></svg></div>
<div class="c" style="left:736.7px;top:652.3px;width:98.3px;height:34px;background:#ffffc0">
</div>
<div class="c" style="left:835.3px;top:652.3px;width:100.9px;height:34px;background:#ffffc0">
</div>
<div class="c" style="left:936.9px;top:652.3px;width:115.9px;height:34px;background:#ffffc0">
</div>
<div class="c" style="left:1052.7px;top:652.3px;width:83.7px;height:34px;background:#ffffc0">
</div>
<div class="c" style="left:1136.8px;top:652.3px;width:111.4px;height:34px;background:#ffffc0">
<div class="ct " style="line-height:30px;text-align:center;">29151100</div>
</div>
<div class="c" style="left:1247.8px;top:652.3px;width:72px;height:34px;background:#ffffc0">
</div>
<div class="c" style="left:1322.8px;top:652.3px;width:134.7px;height:34px;background:#ffffc0">
</div>
<div class="c" style="left:1459px;top:652.3px;width:133.4px;height:34px;background:#ffffc0">
</div>
<div class="c" style="left:52.5px;top:687.4px;width:95px;height:34px;background:#fff">
</div>
<div class="c" style="left:148.5px;top:687.4px;width:40.7px;height:34px;background:#fff">
</div>
<div class="c" style="left:190.3px;top:687.4px;width:41.6px;height:34px;background:#fff">
</div>
<div class="c" style="left:233.8px;top:687.4px;width:45.2px;height:34px;background:#fff">
</div>
<div class="c" style="left:281.8px;top:687.4px;width:41.6px;height:34px;background:#fff">
</div>
<div class="c" style="left:324.3px;top:687.4px;width:112px;height:34px;background:#fff">
</div>
<div class="c" style="left:439px;top:687.4px;width:97px;height:34px;background:#fff">
</div>
<div class="c" style="left:537.5px;top:687.4px;width:43px;height:34px;background:#fff">
</div>
<div class="c" style="left:582px;top:687.4px;width:114.4px;height:34px;background:#fff">
</div>
<div style="left:698.5px;top:688.4px;width:22px;height:32px;background:#fff"></div>
<div style="left:699.5px;top:693.4px;width:14px;height:14px;background:#e6e9ef;border:2px solid #bcbfc6;border-radius:1px"></div>
<div class="c" style="left:736.7px;top:687.4px;width:98.3px;height:34px;background:#fff">
</div>
<div class="c" style="left:835.3px;top:687.4px;width:100.9px;height:34px;background:#fff">
</div>
<div class="c" style="left:936.9px;top:687.4px;width:115.9px;height:34px;background:#fff">
</div>
<div class="c" style="left:1052.7px;top:687.4px;width:83.7px;height:34px;background:#fff">
</div>
<div class="c" style="left:1136.8px;top:687.4px;width:111.4px;height:34px;background:#fff">
</div>
<div class="c" style="left:1247.8px;top:687.4px;width:72px;height:34px;background:#fff">
</div>
<div class="c" style="left:1322.8px;top:687.4px;width:134.7px;height:34px;background:#fff">
</div>
<div class="c" style="left:1459px;top:687.4px;width:133.4px;height:34px;background:#fff">
</div>
<div class="c" style="left:52.5px;top:722.4px;width:95px;height:34px;background:#fff">
</div>
<div class="c" style="left:148.5px;top:722.4px;width:40.7px;height:34px;background:#fff">
</div>
<div class="c" style="left:190.3px;top:722.4px;width:41.6px;height:34px;background:#fff">
</div>
<div class="c" style="left:233.8px;top:722.4px;width:45.2px;height:34px;background:#fff">
</div>
<div class="c" style="left:281.8px;top:722.4px;width:41.6px;height:34px;background:#fff">
</div>
<div class="c" style="left:324.3px;top:722.4px;width:112px;height:34px;background:#fff">
</div>
<div class="c" style="left:439px;top:722.4px;width:97px;height:34px;background:#fff">
</div>
<div class="c" style="left:537.5px;top:722.4px;width:43px;height:34px;background:#fff">
</div>
<div class="c" style="left:582px;top:722.4px;width:114.4px;height:34px;background:#fff">
</div>
<div style="left:698.5px;top:723.4px;width:22px;height:32px;background:#fff"></div>
<div style="left:699.5px;top:728.4px;width:14px;height:14px;background:#e6e9ef;border:2px solid #bcbfc6;border-radius:1px"></div>
<div class="c" style="left:736.7px;top:722.4px;width:98.3px;height:34px;background:#fff">
</div>
<div class="c" style="left:835.3px;top:722.4px;width:100.9px;height:34px;background:#fff">
</div>
<div class="c" style="left:936.9px;top:722.4px;width:115.9px;height:34px;background:#fff">
</div>
<div class="c" style="left:1052.7px;top:722.4px;width:83.7px;height:34px;background:#fff">
</div>
<div class="c" style="left:1136.8px;top:722.4px;width:111.4px;height:34px;background:#fff">
</div>
<div class="c" style="left:1247.8px;top:722.4px;width:72px;height:34px;background:#fff">
</div>
<div class="c" style="left:1322.8px;top:722.4px;width:134.7px;height:34px;background:#fff">
</div>
<div class="c" style="left:1459px;top:722.4px;width:133.4px;height:34px;background:#fff">
</div>
<div class="c" style="left:52.5px;top:757.5px;width:95px;height:34px;background:#fff">
</div>
<div class="c" style="left:148.5px;top:757.5px;width:40.7px;height:34px;background:#fff">
</div>
<div class="c" style="left:190.3px;top:757.5px;width:41.6px;height:34px;background:#fff">
</div>
<div class="c" style="left:233.8px;top:757.5px;width:45.2px;height:34px;background:#fff">
</div>
<div class="c" style="left:281.8px;top:757.5px;width:41.6px;height:34px;background:#fff">
</div>
<div class="c" style="left:324.3px;top:757.5px;width:112px;height:34px;background:#fff">
</div>
<div class="c" style="left:439px;top:757.5px;width:97px;height:34px;background:#fff">
</div>
<div class="c" style="left:537.5px;top:757.5px;width:43px;height:34px;background:#fff">
</div>
<div class="c" style="left:582px;top:757.5px;width:114.4px;height:34px;background:#fff">
</div>
<div style="left:698.5px;top:758.5px;width:22px;height:32px;background:#fff"></div>
<div style="left:699.5px;top:763.5px;width:14px;height:14px;background:#e6e9ef;border:2px solid #bcbfc6;border-radius:1px"></div>
<div class="c" style="left:736.7px;top:757.5px;width:98.3px;height:34px;background:#fff">
</div>
<div class="c" style="left:835.3px;top:757.5px;width:100.9px;height:34px;background:#fff">
</div>
<div class="c" style="left:936.9px;top:757.5px;width:115.9px;height:34px;background:#fff">
</div>
<div class="c" style="left:1052.7px;top:757.5px;width:83.7px;height:34px;background:#fff">
</div>
<div class="c" style="left:1136.8px;top:757.5px;width:111.4px;height:34px;background:#fff">
</div>
<div class="c" style="left:1247.8px;top:757.5px;width:72px;height:34px;background:#fff">
</div>
<div class="c" style="left:1322.8px;top:757.5px;width:134.7px;height:34px;background:#fff">
</div>
<div class="c" style="left:1459px;top:757.5px;width:133.4px;height:34px;background:#fff">
</div>
<div class="c" style="left:52.5px;top:792.6px;width:95px;height:34px;background:#fff">
</div>
<div class="c" style="left:148.5px;top:792.6px;width:40.7px;height:34px;background:#fff">
</div>
<div class="c" style="left:190.3px;top:792.6px;width:41.6px;height:34px;background:#fff">
</div>
<div class="c" style="left:233.8px;top:792.6px;width:45.2px;height:34px;background:#fff">
</div>
<div class="c" style="left:281.8px;top:792.6px;width:41.6px;height:34px;background:#fff">
</div>
<div class="c" style="left:324.3px;top:792.6px;width:112px;height:34px;background:#fff">
</div>
<div class="c" style="left:439px;top:792.6px;width:97px;height:34px;background:#fff">
</div>
<div class="c" style="left:537.5px;top:792.6px;width:43px;height:34px;background:#fff">
</div>
<div class="c" style="left:582px;top:792.6px;width:114.4px;height:34px;background:#fff">
</div>
<div style="left:698.5px;top:793.6px;width:22px;height:32px;background:#fff"></div>
<div style="left:699.5px;top:798.6px;width:14px;height:14px;background:#e6e9ef;border:2px solid #bcbfc6;border-radius:1px"></div>
<div class="c" style="left:736.7px;top:792.6px;width:98.3px;height:34px;background:#fff">
</div>
<div class="c" style="left:835.3px;top:792.6px;width:100.9px;height:34px;background:#fff">
</div>
<div class="c" style="left:936.9px;top:792.6px;width:115.9px;height:34px;background:#fff">
</div>
<div class="c" style="left:1052.7px;top:792.6px;width:83.7px;height:34px;background:#fff">
</div>
<div class="c" style="left:1136.8px;top:792.6px;width:111.4px;height:34px;background:#fff">
</div>
<div class="c" style="left:1247.8px;top:792.6px;width:72px;height:34px;background:#fff">
</div>
<div class="c" style="left:1322.8px;top:792.6px;width:134.7px;height:34px;background:#fff">
</div>
<div class="c" style="left:1459px;top:792.6px;width:133.4px;height:34px;background:#fff">
</div>
<div class="c" style="left:52.5px;top:827.6px;width:95px;height:34px;background:#fff">
</div>
<div class="c" style="left:148.5px;top:827.6px;width:40.7px;height:34px;background:#fff">
</div>
<div class="c" style="left:190.3px;top:827.6px;width:41.6px;height:34px;background:#fff">
</div>
<div class="c" style="left:233.8px;top:827.6px;width:45.2px;height:34px;background:#fff">
</div>
<div class="c" style="left:281.8px;top:827.6px;width:41.6px;height:34px;background:#fff">
</div>
<div class="c" style="left:324.3px;top:827.6px;width:112px;height:34px;background:#fff">
</div>
<div class="c" style="left:439px;top:827.6px;width:97px;height:34px;background:#fff">
</div>
<div class="c" style="left:537.5px;top:827.6px;width:43px;height:34px;background:#fff">
</div>
<div class="c" style="left:582px;top:827.6px;width:114.4px;height:34px;background:#fff">
</div>
<div style="left:698.5px;top:828.6px;width:22px;height:32px;background:#fff"></div>
<div style="left:699.5px;top:833.6px;width:14px;height:14px;background:#e6e9ef;border:2px solid #bcbfc6;border-radius:1px"></div>
<div class="c" style="left:736.7px;top:827.6px;width:98.3px;height:34px;background:#fff">
</div>
<div class="c" style="left:835.3px;top:827.6px;width:100.9px;height:34px;background:#fff">
</div>
<div class="c" style="left:936.9px;top:827.6px;width:115.9px;height:34px;background:#fff">
</div>
<div class="c" style="left:1052.7px;top:827.6px;width:83.7px;height:34px;background:#fff">
</div>
<div class="c" style="left:1136.8px;top:827.6px;width:111.4px;height:34px;background:#fff">
</div>
<div class="c" style="left:1247.8px;top:827.6px;width:72px;height:34px;background:#fff">
</div>
<div class="c" style="left:1322.8px;top:827.6px;width:134.7px;height:34px;background:#fff">
</div>
<div class="c" style="left:1459px;top:827.6px;width:133.4px;height:34px;background:#fff">
</div>
<div class="c" style="left:52.5px;top:862.7px;width:95px;height:34px;background:#fff">
</div>
<div class="c" style="left:148.5px;top:862.7px;width:40.7px;height:34px;background:#fff">
</div>
<div class="c" style="left:190.3px;top:862.7px;width:41.6px;height:34px;background:#fff">
</div>
<div class="c" style="left:233.8px;top:862.7px;width:45.2px;height:34px;background:#fff">
</div>
<div class="c" style="left:281.8px;top:862.7px;width:41.6px;height:34px;background:#fff">
</div>
<div class="c" style="left:324.3px;top:862.7px;width:112px;height:34px;background:#fff">
</div>
<div class="c" style="left:439px;top:862.7px;width:97px;height:34px;background:#fff">
</div>
<div class="c" style="left:537.5px;top:862.7px;width:43px;height:34px;background:#fff">
</div>
<div class="c" style="left:582px;top:862.7px;width:114.4px;height:34px;background:#fff">
</div>
<div style="left:698.5px;top:863.7px;width:22px;height:32px;background:#fff"></div>
<div style="left:699.5px;top:868.7px;width:14px;height:14px;background:#e6e9ef;border:2px solid #bcbfc6;border-radius:1px"></div>
<div class="c" style="left:736.7px;top:862.7px;width:98.3px;height:34px;background:#fff">
</div>
<div class="c" style="left:835.3px;top:862.7px;width:100.9px;height:34px;background:#fff">
</div>
<div class="c" style="left:936.9px;top:862.7px;width:115.9px;height:34px;background:#fff">
</div>
<div class="c" style="left:1052.7px;top:862.7px;width:83.7px;height:34px;background:#fff">
</div>
<div class="c" style="left:1136.8px;top:862.7px;width:111.4px;height:34px;background:#fff">
</div>
<div class="c" style="left:1247.8px;top:862.7px;width:72px;height:34px;background:#fff">
</div>
<div class="c" style="left:1322.8px;top:862.7px;width:134.7px;height:34px;background:#fff">
</div>
<div class="c" style="left:1459px;top:862.7px;width:133.4px;height:34px;background:#fff">
</div>
<div class="c" style="left:52.5px;top:897.8px;width:95px;height:34px;background:#fff">
</div>
<div class="c" style="left:148.5px;top:897.8px;width:40.7px;height:34px;background:#fff">
</div>
<div class="c" style="left:190.3px;top:897.8px;width:41.6px;height:34px;background:#fff">
</div>
<div class="c" style="left:233.8px;top:897.8px;width:45.2px;height:34px;background:#fff">
</div>
<div class="c" style="left:281.8px;top:897.8px;width:41.6px;height:34px;background:#fff">
</div>
<div class="c" style="left:324.3px;top:897.8px;width:112px;height:34px;background:#fff">
</div>
<div class="c" style="left:439px;top:897.8px;width:97px;height:34px;background:#fff">
</div>
<div class="c" style="left:537.5px;top:897.8px;width:43px;height:34px;background:#fff">
</div>
<div class="c" style="left:582px;top:897.8px;width:114.4px;height:34px;background:#fff">
</div>
<div style="left:698.5px;top:898.8px;width:22px;height:32px;background:#fff"></div>
<div style="left:699.5px;top:903.8px;width:14px;height:14px;background:#e6e9ef;border:2px solid #bcbfc6;border-radius:1px"></div>
<div class="c" style="left:736.7px;top:897.8px;width:98.3px;height:34px;background:#fff">
</div>
<div class="c" style="left:835.3px;top:897.8px;width:100.9px;height:34px;background:#fff">
</div>
<div class="c" style="left:936.9px;top:897.8px;width:115.9px;height:34px;background:#fff">
</div>
<div class="c" style="left:1052.7px;top:897.8px;width:83.7px;height:34px;background:#fff">
</div>
<div class="c" style="left:1136.8px;top:897.8px;width:111.4px;height:34px;background:#fff">
</div>
<div class="c" style="left:1247.8px;top:897.8px;width:72px;height:34px;background:#fff">
</div>
<div class="c" style="left:1322.8px;top:897.8px;width:134.7px;height:34px;background:#fff">
</div>
<div class="c" style="left:1459px;top:897.8px;width:133.4px;height:34px;background:#fff">
</div>
<div class="c" style="left:736.7px;top:934px;width:98.3px;height:35px;background:#ffffc0">
</div>
<div class="c" style="left:835.3px;top:934px;width:100.9px;height:35px;background:#ffffc0">
</div>
<div class="c" style="left:1322.8px;top:934px;width:134.7px;height:35px;background:#ffffc0">
</div>
<div class="c" style="left:1459px;top:934px;width:133.4px;height:35px;background:#ffffc0">
</div>
<div class="t" style="right:1580px;top:990.3px;height:28px;line-height:28px;text-align:right;font-size:17px;color:#222">Material</div>
<div class="c" style="left:169.7px;top:985.5px;width:778.3px;height:34px;background:#ffffc0">
</div>
<div class="t" style="right:1580px;top:1030.3px;height:28px;line-height:28px;text-align:right;font-size:17px;color:#222">Unidade</div>
<div class="c" style="left:169.7px;top:1025.3px;width:429.6px;height:33.7px;background:#ffffc0">
<div class="ct " style="line-height:29.7px;text-align:left;padding-left:3px;padding-left:2px">QUILOGRAMA</div>
</div>
<div class="t" style="right:998px;top:1030.3px;height:28px;line-height:28px;text-align:right;font-size:17.4px;color:#222">Tipo Natureza</div>
<div class="c" style="left:753px;top:1025.3px;width:195px;height:33.7px;background:#ffffc0"><div class="dd" style="height:29.7px;width:23px;background:#ececf2"><i></i></div><div class="ct" style="line-height:29.7px;padding-left:5px;font-size:18.9px">Materia Prima</div></div>
<div class="t" style="right:1580px;top:1065.8px;height:29px;line-height:29px;text-align:right;font-size:17px;color:#222">Natureza</div>
<div class="c" style="left:169.7px;top:1061.3px;width:116.9px;height:35.2px;background:#ffffc0">
<div class="ct " style="line-height:31.2px;text-align:center;">3949066</div>
</div>
<div class="c" style="left:291.8px;top:1061px;width:656.2px;height:36px;background:#ffffc0">
<div class="ct " style="line-height:32px;text-align:left;padding-left:3px;color:#8e9db3;font-weight:normal;padding-left:1px;font-size:17.65px">OUTRAS ENTRADAS - MATERIA PRIMA</div>
</div>
<div class="t" style="right:1580px;top:1104.2px;height:30px;line-height:30px;text-align:right;font-size:17.8px;color:#222">Operação</div>
<div class="c" style="left:169.7px;top:1100px;width:55.9px;height:36px;background:#ffffc0">
<div class="ct " style="line-height:32px;text-align:center;">21</div>
</div>
<div class="c" style="left:232.5px;top:1100px;width:54.1px;height:36px;background:#ffffc0">
<div class="ct " style="line-height:32px;text-align:center;">2</div>
</div>
<div class="c" style="left:291.8px;top:1100px;width:656.2px;height:36.3px;background:#ffffc0">
<div class="ct " style="line-height:32.3px;text-align:left;padding-left:3px;color:#8e9db3;font-weight:normal;padding-left:1px;font-size:17.75px">COMPRA DE MATERIA PRIMA</div>
</div>
<div class="btn" style="left:1496px;top:1017px;width:35px;height:37px"><div style="left:-1px;top:-1px;width:38px;height:40px"><svg width="38" height="40" viewBox="0 0 38 40" style="position:absolute;left:0px;top:0px" shape-rendering="auto">
<rect x="6" y="7" width="18" height="23" fill="#dcdcdc" stroke="#222" stroke-width="1.8"/>
<path d="M6.5 7.5h11v17l-3 2h-3v3h-5z" fill="#f80000"/>
<path d="M6 30h8" stroke="#000" stroke-width="2"/>
<circle cx="13.5" cy="15" r="1" fill="#ff9a00"/>
<path d="M4.5 13h2M4.5 19.5h2" stroke="#e8d000" stroke-width="1.4"/>
</svg></div></div>
</body></html>
